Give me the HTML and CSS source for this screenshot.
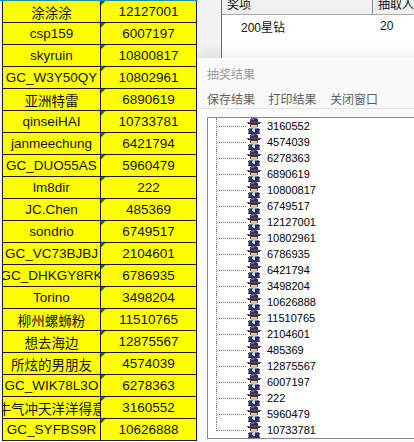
FILE: index.html
```html
<!DOCTYPE html>
<html lang="zh">
<head>
<meta charset="utf-8">
<title>抽奖结果</title>
<link rel="stylesheet" href="styles.css">
</head>
<body>
<svg class="defs" width="0" height="0" aria-hidden="true">
  <symbol id="man" viewBox="0 0 16 16" shape-rendering="crispEdges">
    <rect x="5" y="0" width="6" height="1" fill="#5b4a7e"/>
    <rect x="4" y="1" width="8" height="3" fill="#3e2f5f"/>
    <rect x="5" y="1" width="3" height="1" fill="#7a6aa0"/>
    <rect x="1" y="4" width="14" height="1" fill="#5a4a82"/>
    <rect x="2" y="5" width="12" height="1" fill="#2e2448"/>
    <rect x="4" y="6" width="8" height="1" fill="#5a4030"/>
    <rect x="5" y="7" width="6" height="3" fill="#e6c08e"/>
    <rect x="4" y="7" width="1" height="2" fill="#5a4030"/>
    <rect x="11" y="7" width="1" height="2" fill="#5a4030"/>
    <rect x="3" y="10" width="10" height="1" fill="#6a78a8"/>
    <rect x="2" y="11" width="12" height="5" fill="#3a305e"/>
    <rect x="7" y="10" width="2" height="4" fill="#d0d6ea"/>
    <rect x="6" y="11" width="1" height="2" fill="#b0b8d8"/>
    <rect x="2" y="12" width="1" height="3" fill="#8a96c6"/>
    <rect x="13" y="12" width="1" height="3" fill="#8a96c6"/>
  </symbol>
</svg>
<div class="screen">
  <div class="sheet">
    <div class="row"><span class="strip"></span><span class="c1">涂涂涂</span><span class="c2">12127001</span></div>
    <div class="row"><span class="strip"></span><span class="c1">csp159</span><span class="c2">6007197</span></div>
    <div class="row"><span class="strip"></span><span class="c1">skyruin</span><span class="c2">10800817</span></div>
    <div class="row"><span class="strip"></span><span class="c1">GC_W3Y50QY</span><span class="c2">10802961</span></div>
    <div class="row"><span class="strip"></span><span class="c1">亚洲特雷</span><span class="c2">6890619</span></div>
    <div class="row"><span class="strip"></span><span class="c1">qinseiHAI</span><span class="c2">10733781</span></div>
    <div class="row"><span class="strip"></span><span class="c1">janmeechung</span><span class="c2">6421794</span></div>
    <div class="row"><span class="strip"></span><span class="c1">GC_DUO55AS</span><span class="c2">5960479</span></div>
    <div class="row"><span class="strip"></span><span class="c1">lm8dir</span><span class="c2">222</span></div>
    <div class="row"><span class="strip"></span><span class="c1">JC.Chen</span><span class="c2">485369</span></div>
    <div class="row"><span class="strip"></span><span class="c1">sondrio</span><span class="c2">6749517</span></div>
    <div class="row"><span class="strip"></span><span class="c1">GC_VC73BJBJ</span><span class="c2">2104601</span></div>
    <div class="row"><span class="strip"></span><span class="c1">GC_DHKGY8RK</span><span class="c2">6786935</span></div>
    <div class="row"><span class="strip"></span><span class="c1">Torino</span><span class="c2">3498204</span></div>
    <div class="row"><span class="strip"></span><span class="c1">柳州螺蛳粉</span><span class="c2">11510765</span></div>
    <div class="row"><span class="strip"></span><span class="c1">想去海边</span><span class="c2">12875567</span></div>
    <div class="row"><span class="strip"></span><span class="c1">所炫的男朋友</span><span class="c2">4574039</span></div>
    <div class="row"><span class="strip"></span><span class="c1">GC_WIK78L3O</span><span class="c2">6278363</span></div>
    <div class="row"><span class="strip"></span><span class="c1">牛气冲天洋洋得意</span><span class="c2">3160552</span></div>
    <div class="row"><span class="strip"></span><span class="c1">GC_SYFBS9R</span><span class="c2">10626888</span></div>
  </div>
  <div class="pane">
    <div class="list">
      <div class="lhead"><span class="h1">奖项</span><span class="h2">抽取人</span></div>
      <div class="lrow"><span class="d1">200星钻</span><span class="d2">20</span></div>
    </div>
    <div class="dialog">
      <div class="title">抽奖结果</div>
      <div class="menu"><span>保存结果</span><span>打印结果</span><span>关闭窗口</span></div>
      <div class="tree">
        <div class="node"><span class="branch"><span class="hline"></span></span><svg class="ico" viewBox="0 0 16 16"><use href="#man"/></svg><span class="num">3160552</span></div>
        <div class="node"><span class="branch"><span class="hline"></span></span><svg class="ico" viewBox="0 0 16 16"><use href="#man"/></svg><span class="num">4574039</span></div>
        <div class="node"><span class="branch"><span class="hline"></span></span><svg class="ico" viewBox="0 0 16 16"><use href="#man"/></svg><span class="num">6278363</span></div>
        <div class="node"><span class="branch"><span class="hline"></span></span><svg class="ico" viewBox="0 0 16 16"><use href="#man"/></svg><span class="num">6890619</span></div>
        <div class="node"><span class="branch"><span class="hline"></span></span><svg class="ico" viewBox="0 0 16 16"><use href="#man"/></svg><span class="num">10800817</span></div>
        <div class="node"><span class="branch"><span class="hline"></span></span><svg class="ico" viewBox="0 0 16 16"><use href="#man"/></svg><span class="num">6749517</span></div>
        <div class="node"><span class="branch"><span class="hline"></span></span><svg class="ico" viewBox="0 0 16 16"><use href="#man"/></svg><span class="num">12127001</span></div>
        <div class="node"><span class="branch"><span class="hline"></span></span><svg class="ico" viewBox="0 0 16 16"><use href="#man"/></svg><span class="num">10802961</span></div>
        <div class="node"><span class="branch"><span class="hline"></span></span><svg class="ico" viewBox="0 0 16 16"><use href="#man"/></svg><span class="num">6786935</span></div>
        <div class="node"><span class="branch"><span class="hline"></span></span><svg class="ico" viewBox="0 0 16 16"><use href="#man"/></svg><span class="num">6421794</span></div>
        <div class="node"><span class="branch"><span class="hline"></span></span><svg class="ico" viewBox="0 0 16 16"><use href="#man"/></svg><span class="num">3498204</span></div>
        <div class="node"><span class="branch"><span class="hline"></span></span><svg class="ico" viewBox="0 0 16 16"><use href="#man"/></svg><span class="num">10626888</span></div>
        <div class="node"><span class="branch"><span class="hline"></span></span><svg class="ico" viewBox="0 0 16 16"><use href="#man"/></svg><span class="num">11510765</span></div>
        <div class="node"><span class="branch"><span class="hline"></span></span><svg class="ico" viewBox="0 0 16 16"><use href="#man"/></svg><span class="num">2104601</span></div>
        <div class="node"><span class="branch"><span class="hline"></span></span><svg class="ico" viewBox="0 0 16 16"><use href="#man"/></svg><span class="num">485369</span></div>
        <div class="node"><span class="branch"><span class="hline"></span></span><svg class="ico" viewBox="0 0 16 16"><use href="#man"/></svg><span class="num">12875567</span></div>
        <div class="node"><span class="branch"><span class="hline"></span></span><svg class="ico" viewBox="0 0 16 16"><use href="#man"/></svg><span class="num">6007197</span></div>
        <div class="node"><span class="branch"><span class="hline"></span></span><svg class="ico" viewBox="0 0 16 16"><use href="#man"/></svg><span class="num">222</span></div>
        <div class="node"><span class="branch"><span class="hline"></span></span><svg class="ico" viewBox="0 0 16 16"><use href="#man"/></svg><span class="num">5960479</span></div>
        <div class="node last"><span class="branch"><span class="hline"></span></span><svg class="ico" viewBox="0 0 16 16"><use href="#man"/></svg><span class="num">10733781</span></div>
      </div>
    </div>
  </div>
</div>
</body>
</html>
```
FILE: styles.css
```css
html, body {
  margin: 0;
  padding: 0;
}
body {
  width: 414px;
  height: 442px;
  overflow: hidden;
  background: #fff;
}
.defs {
  display: block;
  width: 0;
  height: 0;
  overflow: hidden;
}
.screen {
  display: flex;
  height: 442px;
}

/* spreadsheet */
.sheet {
  width: 197px;
  flex: none;
  border-top: 1px solid #1d8cab;
  font: 13.5px "Liberation Sans", "Noto Sans CJK SC", sans-serif;
  color: #111;
}
.row {
  display: flex;
  height: 22px;
}
.strip {
  width: 2px;
  flex: none;
  background: #f4f4f4;
}
.c1, .c2 {
  box-sizing: border-box;
  height: 22px;
  flex: none;
  display: flex;
  align-items: center;
  justify-content: center;
  overflow: hidden;
  white-space: nowrap;
  background: #ffff00;
  border-bottom: 1px solid #1a1a1a;
  border-right: 1px solid #1a1a1a;
}
.c1 {
  width: 99px;
  border-left: 1px solid #1a1a1a;
}
.c2 {
  width: 96px;
  background: linear-gradient(135deg, #1f7a1f 0 3.4px, #ffff00 3.4px);
}

/* right pane */
.pane {
  flex: 1;
  display: flex;
  flex-direction: column;
  overflow: hidden;
  background: #f1f1f1;
}
.list {
  flex: none;
  height: 58px;
  margin-left: 24px;
  border-left: 1px solid #6a6a6a;
  background: #fff;
  font: 12px "Liberation Sans", "Noto Sans CJK SC", sans-serif;
  color: #111;
}
.lhead {
  box-sizing: border-box;
  display: flex;
  height: 19px;
  margin-top: -4px;
  background: #f0f0f0;
  border-bottom: 1px solid #a8a8a8;
}
.h1, .h2 {
  box-sizing: border-box;
  line-height: 18px;
  padding-left: 5px;
  white-space: nowrap;
}
.h1 {
  width: 153px;
  border-right: 1px solid #8a8a8a;
}
.lrow {
  display: flex;
  align-items: center;
  height: 22px;
}
.d1 {
  box-sizing: border-box;
  width: 158px;
  padding-left: 19px;
}

/* dialog */
.dialog {
  flex: 1;
  align-self: flex-start;
  width: 260px;
  box-sizing: border-box;
  background: #fafafa;
  border-left: 1px solid #e6e6e6;
  box-shadow: 0 -5px 12px rgba(0, 0, 0, 0.07);
  font: 12px "Noto Sans CJK SC", "Liberation Sans", sans-serif;
}
.title {
  padding: 6px 0 0 9px;
  height: 20px;
  line-height: 20px;
  color: #9b9b9b;
}
.menu {
  margin-top: 5px;
  height: 19px;
  line-height: 19px;
  padding-left: 9px;
  display: flex;
  gap: 13.5px;
  color: #5e5e5e;
  border-bottom: 1px solid #e4e4e4;
}
.tree {
  margin: 8px 0 0 9px;
  border: 1px solid #828790;
  background: #fff;
  font: 11px "Liberation Sans", "DejaVu Sans", sans-serif;
  color: #000;
}
.node {
  display: flex;
  align-items: center;
  height: 16px;
}
.branch {
  box-sizing: border-box;
  flex: none;
  display: flex;
  align-items: center;
  width: 30px;
  height: 16px;
  margin-left: 8px;
  border-left: 1px dotted #7a7a7a;
}
.hline {
  width: 29px;
  border-top: 1px dotted #7a7a7a;
}
.last .branch {
  height: 9px;
  align-self: flex-start;
  align-items: flex-end;
}
.ico {
  width: 16px;
  height: 16px;
  flex: none;
}
.num {
  margin-left: 5px;
  white-space: nowrap;
}
```
